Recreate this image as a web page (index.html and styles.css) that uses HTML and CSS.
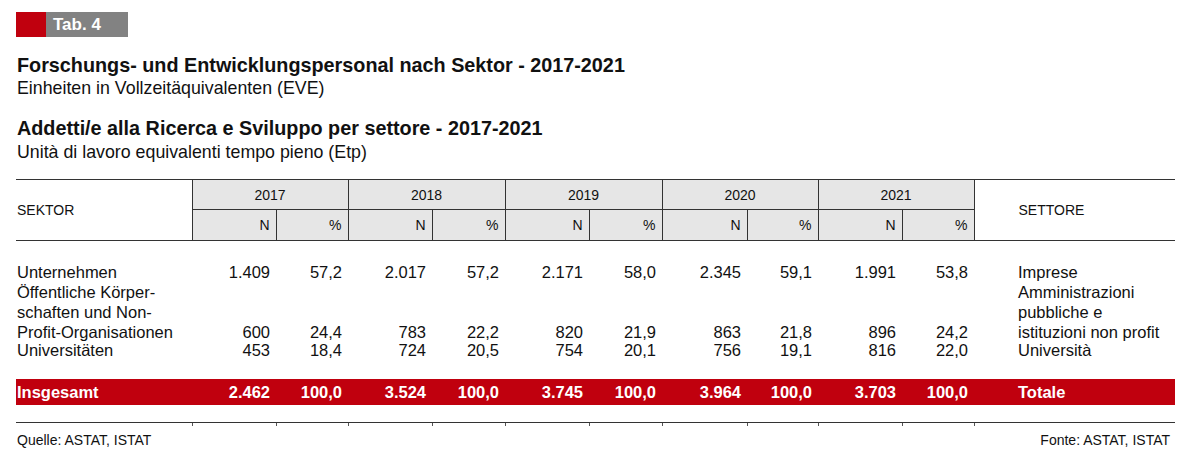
FILE: index.html
```html
<!DOCTYPE html>
<html lang="de">
<head>
<meta charset="utf-8">
<title>Tab. 4</title>
<link rel="stylesheet" href="styles.css">
</head>
<body>
<div class="page">
  <div class="badge"><span class="badge-red"></span><span class="badge-label">Tab. 4</span></div>
  <h1 class="title">Forschungs- und Entwicklungspersonal nach Sektor - 2017-2021</h1>
  <p class="subtitle">Einheiten in Vollzeitäquivalenten (EVE)</p>
  <h1 class="title title-it">Addetti/e alla Ricerca e Sviluppo per settore - 2017-2021</h1>
  <p class="subtitle subtitle-it">Unità di lavoro equivalenti tempo pieno (Etp)</p>

  <table class="data">
    <colgroup>
      <col class="c-label">
      <col class="c-n"><col class="c-p">
      <col class="c-n"><col class="c-p2">
      <col class="c-n"><col class="c-p2">
      <col class="c-n2"><col class="c-p3">
      <col class="c-n"><col class="c-p">
      <col class="c-label-it">
    </colgroup>
    <thead>
      <tr class="h1">
        <th rowspan="2" class="h-label">SEKTOR</th>
        <th colspan="2" class="h-year">2017</th>
        <th colspan="2" class="h-year">2018</th>
        <th colspan="2" class="h-year">2019</th>
        <th colspan="2" class="h-year">2020</th>
        <th colspan="2" class="h-year">2021</th>
        <th rowspan="2" class="h-label h-label-it">SETTORE</th>
      </tr>
      <tr class="h2">
        <th class="h-sub">N</th><th class="h-sub">%</th>
        <th class="h-sub">N</th><th class="h-sub">%</th>
        <th class="h-sub">N</th><th class="h-sub">%</th>
        <th class="h-sub">N</th><th class="h-sub">%</th>
        <th class="h-sub">N</th><th class="h-sub">%</th>
      </tr>
    </thead>
    <tbody>
      <tr class="spacer-top"><td colspan="12"></td></tr>
      <tr class="row">
        <td class="lbl">Unternehmen</td>
        <td class="num">1.409</td><td class="num">57,2</td>
        <td class="num">2.017</td><td class="num">57,2</td>
        <td class="num">2.171</td><td class="num">58,0</td>
        <td class="num">2.345</td><td class="num">59,1</td>
        <td class="num">1.991</td><td class="num">53,8</td>
        <td class="lbl lbl-it">Imprese</td>
      </tr>
      <tr class="row">
        <td class="lbl">Öffentliche Körper-<br>schaften und Non-<br>Profit-Organisationen</td>
        <td class="num">600</td><td class="num">24,4</td>
        <td class="num">783</td><td class="num">22,2</td>
        <td class="num">820</td><td class="num">21,9</td>
        <td class="num">863</td><td class="num">21,8</td>
        <td class="num">896</td><td class="num">24,2</td>
        <td class="lbl lbl-it">Amministrazioni<br>pubbliche e<br>istituzioni non profit</td>
      </tr>
      <tr class="row row-last">
        <td class="lbl">Universitäten</td>
        <td class="num">453</td><td class="num">18,4</td>
        <td class="num">724</td><td class="num">20,5</td>
        <td class="num">754</td><td class="num">20,1</td>
        <td class="num">756</td><td class="num">19,1</td>
        <td class="num">816</td><td class="num">22,0</td>
        <td class="lbl lbl-it">Università</td>
      </tr>
      <tr class="spacer-mid"><td colspan="12"></td></tr>
      <tr class="total">
        <td class="lbl">Insgesamt</td>
        <td class="num">2.462</td><td class="num">100,0</td>
        <td class="num">3.524</td><td class="num">100,0</td>
        <td class="num">3.745</td><td class="num">100,0</td>
        <td class="num">3.964</td><td class="num">100,0</td>
        <td class="num">3.703</td><td class="num">100,0</td>
        <td class="lbl lbl-it">Totale</td>
      </tr>
      <tr class="spacer-bot"><td colspan="12"></td></tr>
      <tr class="ticks">
        <td></td>
        <td class="tick"></td><td class="tick"></td>
        <td class="tick"></td><td class="tick"></td>
        <td class="tick"></td><td class="tick"></td>
        <td class="tick"></td><td class="tick"></td>
        <td class="tick"></td><td class="tick"></td>
        <td class="tick"></td>
      </tr>
    </tbody>
  </table>

  <div class="source">
    <span>Quelle: ASTAT, ISTAT</span>
    <span>Fonte: ASTAT, ISTAT</span>
  </div>
</div>
</body>
</html>
```

FILE: styles.css
```css
* { box-sizing: border-box; }

html, body {
  margin: 0;
  padding: 0;
  background: #ffffff;
}

body {
  font-family: "Liberation Sans", Arial, sans-serif;
  color: #111111;
}

.page {
  padding: 12px 25px 0 16px;
  width: 1200px;
}

.badge {
  display: flex;
  height: 25px;
  width: 112px;
}

.badge-red {
  width: 30px;
  background: #c0000e;
}

.badge-label {
  flex: 1;
  background: #828282;
  color: #ffffff;
  font-weight: bold;
  font-size: 17px;
  line-height: 25px;
  padding-left: 7px;
}

.title {
  margin: 0;
  padding-left: 1px;
  font-size: 19.8px;
  line-height: 22px;
  font-weight: bold;
  margin-top: 17px;
}

.title-it {
  margin-top: 19px;
}

.subtitle {
  margin: 0;
  margin-top: 2px;
  padding-left: 1px;
  font-size: 17.8px;
  line-height: 20px;
}

.subtitle-it {
  margin-top: 3px;
}

.data {
  margin-top: 17px;
  border-collapse: collapse;
  table-layout: fixed;
  width: 1159px;
}

.c-label { width: 176px; }
.c-n { width: 84px; }
.c-n2 { width: 85px; }
.c-p { width: 72px; }
.c-p2 { width: 73px; }
.c-p3 { width: 71px; }
.c-label-it { width: 201px; }

.data th {
  font-weight: normal;
  font-size: 14px;
  padding: 0;
}

.h1 th {
  border-top: 1px solid #333333;
}

.h1 { height: 30px; }
.h2 { height: 31px; }

.h-label {
  text-align: left;
  padding-left: 1px !important;
  border-bottom: 1px solid #333333;
  background: #ffffff;
}

.h-label-it {
  padding-left: 44px !important;
  border-left: 1px solid #333333;
}

.h-year {
  background: #e6e6e6;
  border-left: 1px solid #333333;
  border-right: 1px solid #333333;
  border-bottom: 1px solid #333333;
  text-align: center;
}

.h-sub {
  background: #e6e6e6;
  border-left: 1px solid #333333;
  border-bottom: 1px solid #333333;
  text-align: right;
  padding-right: 6px !important;
}

.data td {
  padding: 0;
  font-size: 16.5px;
  line-height: 20px;
  vertical-align: bottom;
}

.spacer-top td { height: 21px; }
.spacer-mid td { height: 20px; }
.spacer-bot td { height: 18px; }

.row-last td { line-height: 17px; }

.lbl {
  text-align: left;
  padding-left: 1px !important;
  white-space: nowrap;
}

.lbl-it {
  padding-left: 44px !important;
}

.num {
  text-align: right;
  padding-right: 6px !important;
}

.total td {
  background: #c0000e;
  color: #ffffff;
  font-weight: bold;
  height: 26px;
  vertical-align: middle;
}

.ticks td {
  height: 3px;
  border-top: 1px solid #333333;
}

.ticks .tick {
  border-left: 1px solid #555555;
}

.source {
  display: flex;
  justify-content: space-between;
  width: 1159px;
  font-size: 14px;
  line-height: 16px;
  padding: 6px 5px 0 1px;
}
```
